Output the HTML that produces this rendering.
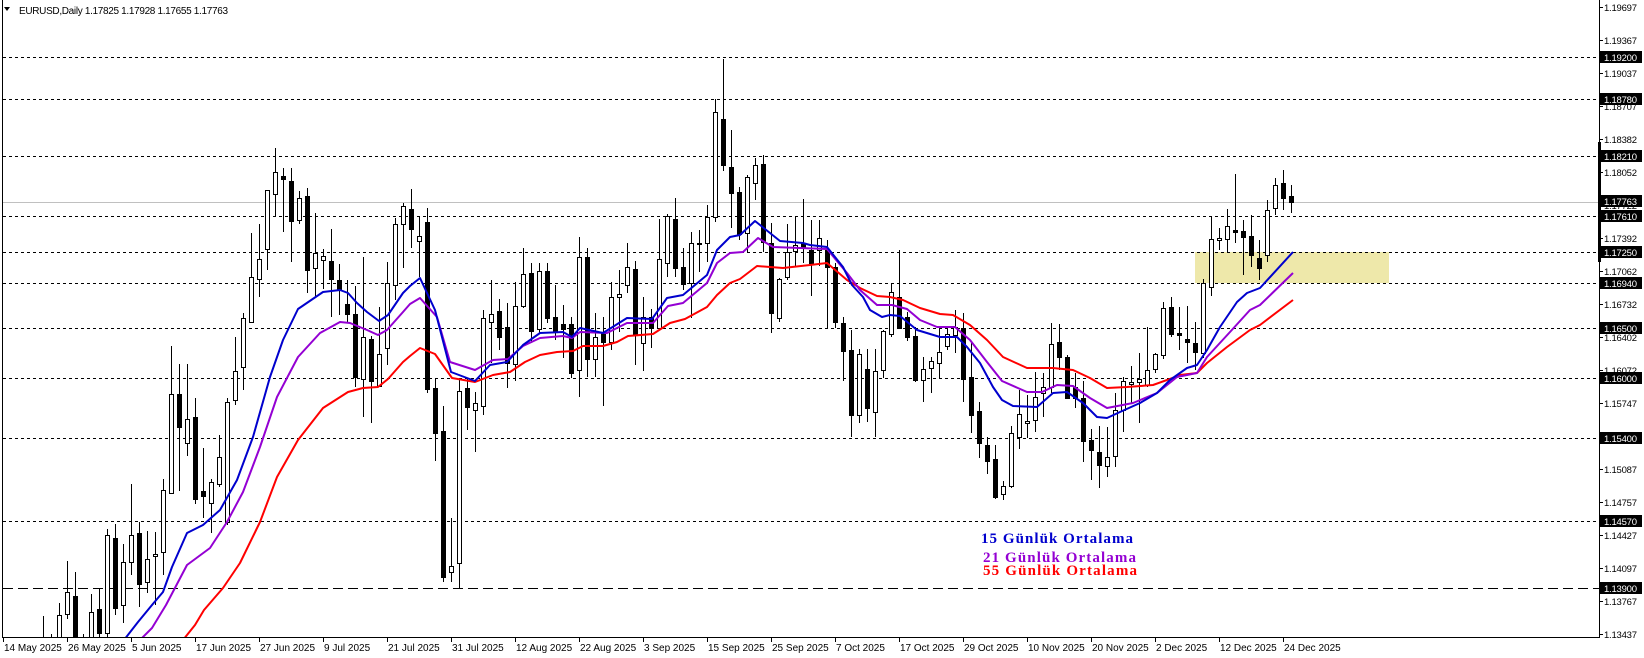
<!DOCTYPE html>
<html><head><meta charset="utf-8"><style>
html,body{margin:0;padding:0;background:#fff;width:1644px;height:658px;overflow:hidden}
svg{display:block}
text{font-family:"Liberation Sans",sans-serif}
</style></head><body>
<svg id="s" width="1644" height="658" xmlns="http://www.w3.org/2000/svg"></svg>
<script>
const s=document.getElementById('s');
let h='';
h+='<defs><clipPath id="c"><rect x="3" y="0" width="1596" height="637"/></clipPath></defs>';
const Y=p=>57+(1.192-p)*10019;
h+='<rect x="1195" y="252" width="194" height="31" fill="#eee8aa"/>';
const lv=[1.192,1.1878,1.1821,1.1761,1.1725,1.1694,1.165,1.16,1.154,1.1457];
lv.forEach(p=>{const y=Math.round(Y(p))+0.5;h+=`<line x1="3" x2="1599" y1="${y}" y2="${y}" stroke="#000" stroke-dasharray="3,3" shape-rendering="crispEdges"/>`;});
h+=`<line x1="3" x2="1599" y1="${Math.round(Y(1.139))+0.5}" y2="${Math.round(Y(1.139))+0.5}" stroke="#000" stroke-dasharray="10,5" shape-rendering="crispEdges"/>`;
h+=`<line x1="3" x2="1599" y1="202.5" y2="202.5" stroke="#c0c0c0" shape-rendering="crispEdges"/>`;
const D={5:[0,640,650,616,660],6:[0,640,650,634,660],7:[1,615,640,603,650],8:[1,592,614,561,619],9:[0,596,645,572,650],10:[0,640,650,634,660],11:[1,612,640,594,650],12:[0,609,633,588,640],13:[1,535,633,529,640],14:[0,538,608,524,615],15:[1,562,605,544,623],16:[1,535,562,484,575],17:[0,533,584,522,607],18:[1,559,582,531,593],19:[1,554,556,532,605],20:[1,490,552,479,575],21:[1,394,493,346,493],22:[0,394,427,364,491],23:[1,419,443,364,456],24:[0,417,499,398,504],25:[0,491,496,448,518],26:[1,482,503,479,533],27:[1,457,484,435,487],28:[1,402,522,398,525],29:[1,371,400,337,405],30:[1,318,367,313,390],31:[1,277,322,233,323],32:[1,259,279,224,297],33:[1,190,249,190,270],34:[1,172,194,148,217],35:[0,176,179,168,232],36:[0,181,221,168,262],37:[1,198,220,191,224],38:[0,196,270,188,293],39:[1,253,268,213,296],40:[1,256,260,249,289],41:[0,261,279,229,317],42:[0,280,289,264,315],43:[0,304,314,280,323],44:[0,314,377,286,387],45:[1,337,379,257,417],46:[0,339,381,336,423],47:[1,354,386,307,386],48:[1,283,348,262,365],49:[1,224,285,218,300],50:[1,206,224,203,268],51:[0,209,229,189,248],52:[1,236,241,216,277],53:[0,222,389,208,393],54:[0,388,433,378,461],55:[0,431,577,406,582],56:[1,566,572,518,582],57:[1,391,563,380,588],58:[0,388,407,378,430],59:[1,403,410,392,452],60:[1,318,406,310,415],61:[1,314,322,280,363],62:[0,311,337,299,350],63:[0,327,363,303,388],64:[1,306,364,282,381],65:[1,274,306,248,308],66:[0,273,331,263,343],67:[1,271,329,263,333],68:[0,271,318,263,323],69:[0,317,332,285,340],70:[0,324,329,305,358],71:[0,324,373,317,378],72:[1,257,370,237,397],73:[0,257,359,248,377],74:[1,337,359,313,377],75:[0,333,342,317,406],76:[1,297,342,282,350],77:[1,294,297,270,332],78:[1,267,285,243,293],79:[0,269,335,261,365],80:[1,317,343,297,371],81:[0,317,328,309,348],82:[1,259,328,219,328],83:[1,216,263,214,277],84:[0,219,268,198,277],85:[0,267,284,248,290],86:[1,243,283,232,318],87:[1,243,244,230,272],88:[1,217,243,205,262],89:[1,112,217,99,222],90:[0,119,165,59,171],91:[0,167,193,130,228],92:[0,192,234,187,240],93:[1,177,233,175,252],94:[1,165,183,158,200],95:[0,164,242,155,252],96:[0,243,313,223,333],97:[1,279,318,278,322],98:[1,252,277,224,280],99:[1,245,251,216,267],100:[0,243,247,199,263],101:[0,250,263,220,296],102:[1,238,250,220,266],103:[0,250,267,240,328],104:[0,267,322,263,328],105:[0,323,351,317,381],106:[0,350,415,330,437],107:[1,354,415,349,423],108:[0,369,408,349,422],109:[1,371,412,349,437],110:[1,331,370,330,378],111:[1,292,334,283,337],112:[0,297,328,250,328],113:[0,317,337,312,341],114:[0,336,380,327,382],115:[1,369,380,357,402],116:[1,361,368,357,393],117:[1,352,363,328,378],118:[1,334,346,328,350],119:[1,327,335,310,353],120:[0,328,379,313,402],121:[0,377,415,343,433],122:[0,411,443,402,458],123:[0,445,461,437,474],124:[0,459,497,445,499],125:[1,486,494,481,500],126:[1,433,486,426,488],127:[1,414,437,390,449],128:[1,421,423,395,438],129:[1,397,420,372,432],130:[1,387,393,373,417],131:[1,344,387,323,393],132:[0,342,357,324,370],133:[0,357,398,355,398],134:[0,387,398,373,408],135:[0,398,441,381,462],136:[0,440,450,429,480],137:[0,452,465,426,488],138:[1,457,466,427,477],139:[1,410,456,393,467],140:[1,381,410,377,432],141:[1,382,384,366,403],142:[1,379,382,353,423],143:[1,370,385,327,387],144:[1,354,369,353,373],145:[1,308,355,302,359],146:[0,307,334,297,337],147:[0,333,335,307,350],148:[0,339,342,306,363],149:[0,343,352,322,370],150:[1,283,353,279,358],151:[1,239,287,216,296],152:[1,238,240,228,250],153:[1,226,239,209,252],154:[0,230,232,174,243],155:[0,231,237,220,275],156:[0,236,255,215,267],157:[0,258,268,240,280],158:[1,210,255,200,262],159:[1,185,208,178,215],160:[0,183,198,170,210],161:[0,196,202,185,213]};
h+='<g clip-path="url(#c)" shape-rendering="crispEdges">';
for(const k in D){const [b,t,bo,hi,lo]=D[k];const x=3+8*k;
h+=`<line x1="${x+0.5}" x2="${x+0.5}" y1="${hi}" y2="${lo}" stroke="#000"/>`;
const hh=Math.max(1,bo-t);
if(b)h+=`<rect x="${x-1.5}" y="${t+0.5}" width="4" height="${hh}" fill="#fff" stroke="#000"/>`;
else h+=`<rect x="${x-2}" y="${t}" width="5" height="${hh+1}" fill="#000"/>`;}
h+='</g>';
const blue=[[124,640],[138,622],[152,605],[163,592],[172,567],[187,533],[203,525],[220,510],[237,480],[253,437],[270,377],[283,340],[298,309],[323,292],[340,290],[348,293],[357,303],[367,312],[379,321],[388,315],[403,293],[410,286],[420,278],[435,310],[451,372],[475,381],[490,365],[507,362],[523,345],[540,333],[563,332],[572,337],[580,328],[603,333],[627,318],[652,319],[667,298],[683,295],[707,275],[717,250],[730,237],[740,235],[755,221],[770,233],[780,241],[803,243],[810,245],[827,247],[843,267],[852,285],[863,297],[870,310],[882,317],[890,315],[900,316],[917,330],[940,337],[957,337],[967,347],[980,363],[993,387],[1002,400],[1013,406],[1037,407],[1053,393],[1067,392],[1083,403],[1097,417],[1107,418],[1120,412],[1140,403],[1157,393],[1170,380],[1187,368],[1197,365],[1207,350],[1220,327],[1237,302],[1247,293],[1260,288],[1293,252]];
const purp=[[140,640],[152,628],[166,605],[187,565],[210,548],[227,522],[243,492],[260,447],[277,397],[298,357],[320,333],[340,322],[350,323],[367,330],[378,335],[387,330],[403,312],[410,304],[420,298],[437,317],[450,362],[475,370],[493,360],[508,359],[523,346],[540,338],[563,336],[572,338],[580,332],[607,333],[627,323],[653,323],[668,306],[683,303],[707,283],[717,263],[730,253],[743,252],[758,238],[773,247],[827,249],[847,273],[860,290],[877,305],[892,305],[907,309],[920,320],[937,327],[955,327],[970,340],[987,362],[1002,381],[1027,392],[1042,392],[1057,385],[1073,386],[1090,398],[1107,408],[1133,403],[1157,393],[1177,377],[1197,373],[1207,357],[1230,332],[1250,310],[1260,305],[1293,273]];
const red=[[183,640],[195,625],[204,610],[223,588],[240,563],[260,522],[277,477],[298,440],[323,408],[348,392],[363,388],[378,387],[388,379],[403,362],[410,356],[420,348],[435,354],[452,378],[475,382],[493,375],[510,372],[525,362],[540,355],[557,352],[573,351],[583,346],[603,346],[617,342],[628,336],[653,334],[670,323],[685,319],[707,307],[717,295],[730,283],[740,279],[757,266],[770,267],[783,268],[810,265],[827,263],[847,280],[860,288],[877,296],[890,297],[903,300],[920,308],[940,314],[953,315],[970,325],[987,340],[1003,357],[1027,368],[1053,368],[1073,370],[1090,378],[1107,388],[1127,387],[1153,385],[1167,380],[1180,375],[1197,373],[1207,363],[1227,347],[1250,330],[1260,325],[1293,300]];
function pl(a,c){return `<polyline clip-path="url(#c)" points="${a.map(p=>p.join(',')).join(' ')}" fill="none" stroke="${c}" stroke-width="2" stroke-linejoin="round"/>`;}
h+=pl(red,'#ff0000')+pl(purp,'#9400d3')+pl(blue,'#0000cd');
h+='<text x="981" y="543" font-weight="bold" font-size="15" fill="#0000cd" textLength="152" style="font-family:\'Liberation Serif\',serif">15 Günlük Ortalama</text>';
h+='<text x="983" y="562" font-weight="bold" font-size="15" fill="#9400d3" textLength="153" style="font-family:\'Liberation Serif\',serif">21 Günlük Ortalama</text>';
h+='<text x="983" y="575" font-weight="bold" font-size="15" fill="#ff0000" textLength="154" style="font-family:\'Liberation Serif\',serif">55 Günlük Ortalama</text>';
h+='<g shape-rendering="crispEdges" stroke="#000">';
h+='<line x1="2.5" x2="2.5" y1="0" y2="637"/><line x1="1599.5" x2="1599.5" y1="0" y2="638"/><line x1="2" x2="1600" y1="637.5" y2="637.5"/>';
h+='</g>';
h+='<rect x="1598" y="142" width="3" height="120" fill="#000"/>';
const ticks=[1.19697,1.19367,1.19037,1.18707,1.18382,1.18052,1.17722,1.17392,1.17062,1.16732,1.16402,1.16072,1.15747,1.15417,1.15087,1.14757,1.14427,1.14097,1.13767,1.13437];
ticks.forEach(p=>{const y=Math.round(Y(p));h+=`<line x1="1600" x2="1603" y1="${y+0.5}" y2="${y+0.5}" stroke="#000" shape-rendering="crispEdges"/><text x="1604" y="${y+4}" font-size="9.5" textLength="33">${p.toFixed(5)}</text>`;});
const hl=[1.192,1.1878,1.1821,1.17763,1.1761,1.1725,1.1694,1.165,1.16,1.154,1.1457,1.139];
hl.forEach(p=>{const y=Math.round(Y(p));h+=`<rect x="1600" y="${y-6}" width="42" height="12" fill="#000"/><text x="1604" y="${y+4}" font-size="9.5" fill="#fff" textLength="33">${p.toFixed(5)}</text>`;});
const ds=['14 May 2025','26 May 2025','5 Jun 2025','17 Jun 2025','27 Jun 2025','9 Jul 2025','21 Jul 2025','31 Jul 2025','12 Aug 2025','22 Aug 2025','3 Sep 2025','15 Sep 2025','25 Sep 2025','7 Oct 2025','17 Oct 2025','29 Oct 2025','10 Nov 2025','20 Nov 2025','2 Dec 2025','12 Dec 2025','24 Dec 2025'];
ds.forEach((d,k)=>{const x=3+64*k;h+=`<line x1="${x+0.5}" x2="${x+0.5}" y1="638" y2="642" stroke="#000" shape-rendering="crispEdges"/><text x="${x+1}" y="651" font-size="10">${d}</text>`;});
h+='<polygon points="4,7 10,7 7,11" fill="#000"/>';
h+='<text x="19" y="14" font-size="10" textLength="209">EURUSD,Daily  1.17825 1.17928 1.17655 1.17763</text>';
s.innerHTML=h;
</script>
</body></html>
